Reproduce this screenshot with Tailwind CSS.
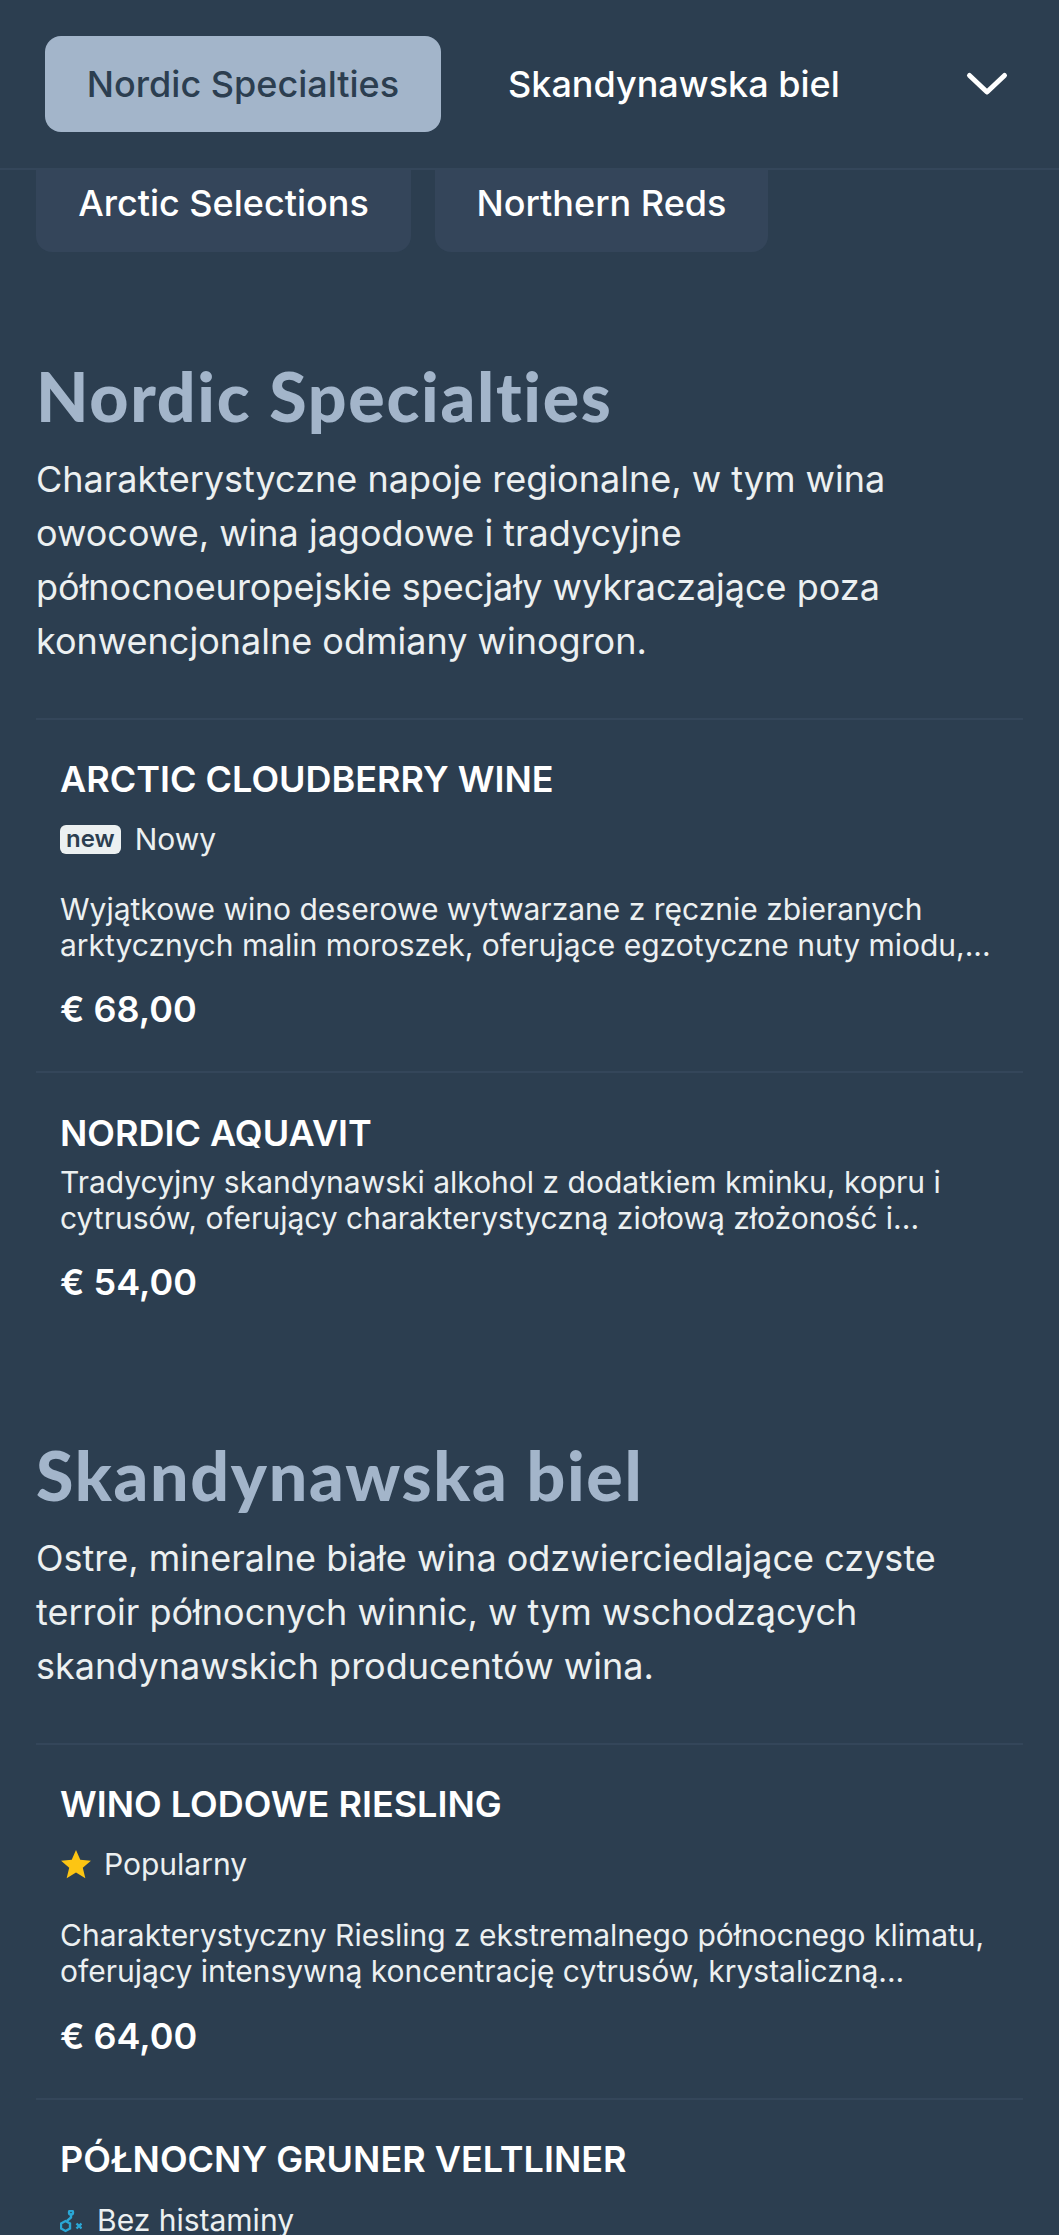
<!DOCTYPE html>
<html lang="pl">
<head>
    <meta charset="UTF-8">
    <meta name="viewport" content="width=device-width, initial-scale=1.0">
    <title>Menu</title>
    <script src="https://cdn.jsdelivr.net/npm/@tailwindcss/browser@4"></script>
</head>
<body class="bg-[#2c3e50] font-['Inter',sans-serif] text-white overflow-hidden">
    <div class="relative h-[2235px] overflow-hidden">
        <!-- sticky category bar -->
        <nav class="relative z-10 h-[170px] bg-[#2c3e50] border-b-2 border-[#34465a] flex items-center pl-[45px] pr-[50px]">
            <span class="w-[396px] h-[96px] flex items-center justify-center rounded-[16px] bg-[#a3b5ca] text-[#2c3e50] text-[36px] font-medium">Nordic Specialties</span>
            <span class="ml-[67px] text-[36px] font-medium">Skandynawska biel</span>
            <svg class="ml-auto w-[44px] h-[44px]" viewBox="0 0 44 44" fill="none" stroke="#fff" stroke-width="5" stroke-linecap="round" stroke-linejoin="round"><path d="M4.5 13.5 L22 30 L39.5 13.5"/></svg>
        </nav>

        <div class="flex gap-[24px] pl-[36px] mt-[-2px]">
            <span class="h-[84px] w-[375px] pb-[14px] flex items-center justify-center rounded-b-[16px] bg-[#34455a] text-[36px] font-medium">Arctic Selections</span>
            <span class="h-[84px] w-[333px] pb-[14px] flex items-center justify-center rounded-b-[16px] bg-[#34455a] text-[36px] font-medium">Northern Reds</span>
        </div>

        <section class="px-[36px] pt-[103px]">
            <h2 class="font-['Lato',sans-serif] font-black tracking-[1.7px] text-[68px] leading-[82px] text-[#a3b5ca]">Nordic Specialties</h2>
            <p class="mt-[15px] text-[36px] leading-[54px] text-[#ecf0f1]">Charakterystyczne napoje regionalne, w tym wina owocowe, wina jagodowe i tradycyjne północnoeuropejskie specjały wykraczające poza konwencjonalne odmiany winogron.</p>

            <div class="mt-[50px] border-t-2 border-[#34465a] px-[24px] pt-[36px] pb-[39px]">
                <h3 class="text-[36px] leading-[46px] font-semibold">ARCTIC CLOUDBERRY WINE</h3>
                <div class="mt-[17px] flex items-center gap-[14px] text-[30px] leading-[40px] text-[#ecf0f1]">
                    <span class="rounded-[6px] bg-[#ecf0f1] px-[6px] h-[29px] flex items-center text-[24px] font-semibold text-[#2c3e50]">new</span>
                    <span>Nowy</span>
                </div>
                <p class="mt-[32px] text-[30px] leading-[36px] text-[#ecf0f1]">Wyjątkowe wino deserowe wytwarzane z ręcznie zbieranych<br>arktycznych malin moroszek, oferujące egzotyczne nuty miodu,...</p>
                <p class="mt-[23px] text-[36px] leading-[46px] font-semibold">€ 68,00</p>
            </div>

            <div class="border-t-2 border-[#34465a] px-[24px] pt-[37px] pb-[39px]">
                <h3 class="text-[36px] leading-[46px] font-semibold">NORDIC AQUAVIT</h3>
                <p class="mt-[8px] text-[30px] leading-[36px] text-[#ecf0f1]">Tradycyjny skandynawski alkohol z dodatkiem kminku, kopru i<br>cytrusów, oferujący charakterystyczną ziołową złożoność i...</p>
                <p class="mt-[23px] text-[36px] leading-[46px] font-semibold">€ 54,00</p>
            </div>
        </section>

        <section class="px-[36px] pt-[90px]">
            <h2 class="font-['Lato',sans-serif] font-black tracking-[1.7px] text-[68px] leading-[82px] text-[#a3b5ca]">Skandynawska biel</h2>
            <p class="mt-[15px] text-[36px] leading-[54px] text-[#ecf0f1]">Ostre, mineralne białe wina odzwierciedlające czyste terroir północnych winnic, w tym wschodzących skandynawskich producentów wina.</p>

            <div class="mt-[50px] border-t-2 border-[#34465a] px-[24px] pt-[36px] pb-[39px]">
                <h3 class="text-[36px] leading-[46px] font-semibold">WINO LODOWE RIESLING</h3>
                <div class="mt-[17px] flex items-center gap-[12px] text-[30px] leading-[40px] text-[#ecf0f1]">
                    <svg class="w-[32px] h-[32px]" viewBox="0 0 24 24" fill="#fdc513"><path d="M12 1.5l3.2 7.4 8 .7-6.1 5.2 1.9 7.8L12 18.4l-7 4.2 1.9-7.8L.8 9.6l8-.7z"/></svg>
                    <span>Popularny</span>
                </div>
                <p class="mt-[33px] text-[30px] leading-[36px] text-[#ecf0f1]">Charakterystyczny Riesling z ekstremalnego północnego klimatu,<br>oferujący intensywną koncentrację cytrusów, krystaliczną...</p>
                <p class="mt-[24px] text-[36px] leading-[46px] font-semibold">€ 64,00</p>
            </div>

            <div class="border-t-2 border-[#34465a] px-[24px] pt-[36px]">
                <h3 class="text-[36px] leading-[46px] font-semibold">PÓŁNOCNY GRUNER VELTLINER</h3>
                <div class="mt-[18px] flex items-center gap-[15px] text-[30px] leading-[40px] text-[#ecf0f1]">
                    <svg class="w-[22px] h-[24px] mt-[3px]" viewBox="0 0 22 24" fill="none" stroke="#2aa7d6" stroke-width="2.4"><circle cx="11" cy="2.5" r="2"/><path d="M11 4.5v3L7 11"/><path d="M5.5 11l4.5 2.5v5L5.5 21 1 18.5v-5z"/><path d="M16.5 13.5l5 5M21.5 13.5l-5 5"/></svg>
                    <span>Bez histaminy</span>
                </div>
            </div>
        </section>
    </div>
</body>
</html>
